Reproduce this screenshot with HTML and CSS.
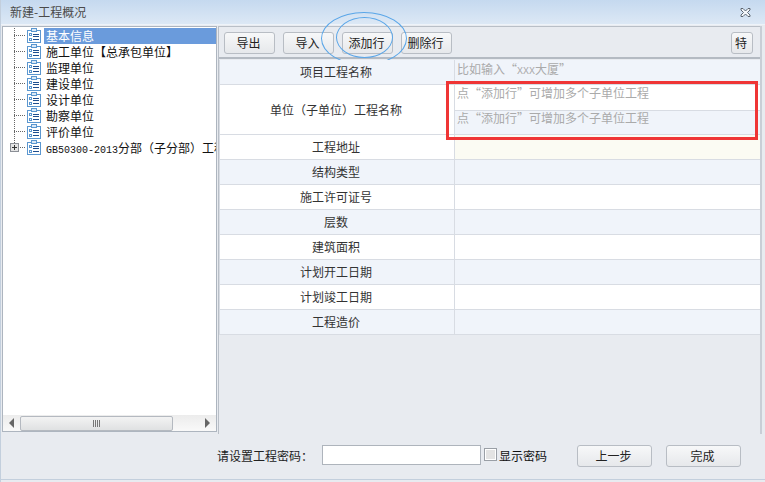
FILE: index.html
```html
<!DOCTYPE html>
<html lang="zh-CN">
<head>
<meta charset="utf-8">
<title>新建-工程概况</title>
<link rel="stylesheet" href="styles.css">
</head>
<body>
<svg class="defs" width="0" height="0">
  <symbol id="doc" viewBox="0 0 16 16">
    <rect x="1.5" y="2.5" width="13" height="12" fill="#fff" stroke="#5b97d0"/>
    <rect x="5.5" y="0.5" width="5" height="3" fill="#dbe9f6" stroke="#5b97d0"/>
    <rect x="3.5" y="5.5" width="2" height="2" fill="#fff" stroke="#5b97d0"/>
    <rect x="3.5" y="10.5" width="2" height="2" fill="#fff" stroke="#5b97d0"/>
    <path d="M7 6.500h6M7 8.500h6M7 11.500h6" stroke="#1f4f8f" fill="none"/>
  </symbol>
</svg>
<div class="window">
  <header class="titlebar">
    <span class="title">新建-工程概况</span>
    <svg class="close" width="13" height="11" viewBox="0 0 13 11"><path d="M2 1.500h2l2.500 2.500 2.500-2.500h2v1.500l-2.500 2.500 2.500 2.500v1.500h-2l-2.500-2.500-2.500 2.500h-2v-1.500l2.500-2.500-2.500-2.500z" fill="#f4f7fa" stroke="#5d6670"/></svg>
  </header>
  <div class="main">
    <aside class="tree">
      <ul class="tree-list">
        <li class="node"><span class="branch"></span><svg class="doc"><use href="#doc"/></svg><span class="label selected">基本信息</span></li>
        <li class="node"><span class="branch"></span><svg class="doc"><use href="#doc"/></svg><span class="label">施工单位【总承包单位】</span></li>
        <li class="node"><span class="branch"></span><svg class="doc"><use href="#doc"/></svg><span class="label">监理单位</span></li>
        <li class="node"><span class="branch"></span><svg class="doc"><use href="#doc"/></svg><span class="label">建设单位</span></li>
        <li class="node"><span class="branch"></span><svg class="doc"><use href="#doc"/></svg><span class="label">设计单位</span></li>
        <li class="node"><span class="branch"></span><svg class="doc"><use href="#doc"/></svg><span class="label">勘察单位</span></li>
        <li class="node"><span class="branch"></span><svg class="doc"><use href="#doc"/></svg><span class="label">评价单位</span></li>
        <li class="node"><span class="branch last"><span class="expander"></span></span><svg class="doc"><use href="#doc"/></svg><span class="label"><span class="latin">GB50300-2013</span>分部（子分部）工程概况</span></li>
      </ul>
      <div class="hscroll">
        <span class="arrow left"></span>
        <span class="thumb"><span class="grip"></span></span>
        <span class="arrow right"></span>
      </div>
    </aside>
    <section class="content">
      <div class="toolbar">
        <button class="btn">导出</button>
        <button class="btn">导入</button>
        <button class="btn">添加行</button>
        <button class="btn">删除行</button>
        <button class="btn small">特</button>
        <span class="ring outer"></span>
        <span class="ring inner"></span>
      </div>
      <div class="sheet">
        <div class="row alt"><div class="key">项目工程名称</div><div class="val hint">比如输入“<span class="latin">XXX</span>大厦”</div></div>
        <div class="row tall">
          <div class="key">单位（子单位）工程名称</div>
          <div class="val stack">
            <div class="sub hint">点“添加行”可增加多个子单位工程</div>
            <div class="sub alt hint">点“添加行”可增加多个子单位工程</div>
          </div>
        </div>
        <div class="row"><div class="key">工程地址</div><div class="val cream"></div></div>
        <div class="row alt"><div class="key">结构类型</div><div class="val"></div></div>
        <div class="row"><div class="key">施工许可证号</div><div class="val"></div></div>
        <div class="row alt"><div class="key">层数</div><div class="val"></div></div>
        <div class="row"><div class="key">建筑面积</div><div class="val"></div></div>
        <div class="row alt"><div class="key">计划开工日期</div><div class="val"></div></div>
        <div class="row"><div class="key">计划竣工日期</div><div class="val"></div></div>
        <div class="row alt"><div class="key">工程造价</div><div class="val"></div></div>
        <span class="callout"></span>
      </div>
    </section>
  </div>
  <footer class="footer">
    <label class="pw-label" for="pw">请设置工程密码：</label>
    <input class="pw-input" id="pw" type="text">
    <span class="check"></span>
    <span class="check-label">显示密码</span>
    <button class="btn wide prev">上一步</button>
    <button class="btn wide">完成</button>
  </footer>
</div>
</body>
</html>
```
FILE: styles.css
```css
* { box-sizing: border-box; }
html, body { margin: 0; padding: 0; }
body {
  width: 765px;
  height: 482px;
  overflow: hidden;
  font-family: "Noto Sans CJK SC", "Liberation Sans", sans-serif;
  font-size: 12px;
  line-height: 16px;
  color: #222;
  background: #e8ebf0;
}
.defs { display: block; height: 0; }
.latin { font-family: "Liberation Mono", monospace; font-size: 10px; }

.window {
  width: 765px;
  height: 482px;
  display: flex;
  flex-direction: column;
  background: #e8ebf0;
  border-left: 1px solid #c3cfdd;
}

.titlebar {
  height: 25px;
  flex: none;
  display: flex;
  align-items: center;
  justify-content: space-between;
  padding: 0 13px 0 9px;
  background: linear-gradient(#c5d9ef, #dce8f5);
  border-bottom: 1px solid #eef3f9;
}
.title { color: #4a4a4a; }

.main {
  flex: none;
  height: 409px;
  display: flex;
  padding: 1px 3px 0 1px;
}

.tree {
  width: 215px;
  height: 406px;
  flex: none;
  display: flex;
  flex-direction: column;
  background: #fff;
  border: 1px solid #adb5bf;
}
.tree-list {
  flex: 1;
  list-style: none;
  margin: 0;
  padding: 1px 0 0;
  overflow: hidden;
}
.node {
  height: 16px;
  display: flex;
  align-items: center;
  white-space: nowrap;
}
.branch {
  position: relative;
  width: 12px;
  height: 16px;
  margin-left: 11px;
  flex: none;
  background:
    repeating-linear-gradient(to bottom, #666 0 1px, transparent 1px 2px) 0 0 / 1px 100% no-repeat,
    repeating-linear-gradient(to right, #666 0 1px, transparent 1px 2px) 0 7px / 100% 1px no-repeat;
}
.branch.last {
  background:
    repeating-linear-gradient(to bottom, #666 0 1px, transparent 1px 2px) 0 0 / 1px 8px no-repeat,
    repeating-linear-gradient(to right, #666 0 1px, transparent 1px 2px) 0 7px / 100% 1px no-repeat;
}
.expander {
  position: absolute;
  left: -4px;
  top: 3px;
  width: 9px;
  height: 9px;
  border: 1px solid #8b8f96;
  background:
    linear-gradient(#333, #333) center / 5px 1px no-repeat,
    linear-gradient(#333, #333) center / 1px 5px no-repeat,
    #e4e4e4;
}
.doc { width: 16px; height: 16px; flex: none; }
.label {
  flex: 1;
  min-width: 0;
  overflow: hidden;
  height: 16px;
  margin-left: 2px;
  padding-left: 2px;
  color: #111;
}
.label.selected { background: #6a9bdc; color: #fff; }

.hscroll {
  height: 16px;
  flex: none;
  display: flex;
  align-items: center;
  padding: 0 6px;
  background: linear-gradient(#ececec, #f9f9f9);
}
.arrow { width: 0; height: 0; flex: none; border-top: 5px solid transparent; border-bottom: 5px solid transparent; }
.arrow.left { border-right: 5px solid #666; }
.arrow.right { border-left: 5px solid #666; margin-left: auto; }
.thumb {
  width: 153px;
  height: 15px;
  margin-left: 6px;
  display: flex;
  align-items: center;
  justify-content: center;
  border: 1px solid #b4b9c0;
  border-radius: 2px;
  background: linear-gradient(#f3f3f3, #dfe1e2);
}
.grip {
  width: 7px;
  height: 7px;
  background: repeating-linear-gradient(to right, #777 0 1px, transparent 1px 2px);
}

.content {
  flex: 1;
  min-width: 0;
  height: 408px;
  margin-left: 1px;
  display: flex;
  flex-direction: column;
  border-left: 1px solid #b9bfc7;
  border-right: 2px solid #c9ced6;
}
.toolbar {
  position: relative;
  height: 33px;
  flex: none;
  display: flex;
  align-items: flex-start;
  gap: 8px;
  padding: 5px 7px 0 5px;
  background: #e8ebf0;
  border-top: 1px solid #b9bfc7;
  border-bottom: 2px solid #b4bac2;
}
.btn {
  width: 51px;
  height: 22px;
  padding: 0 2px 0 0;
  flex: none;
  font: inherit;
  color: #222;
  border: 1px solid #b8bdc4;
  border-radius: 3px;
  background: linear-gradient(#f7f8f9, #e6e8eb);
}
.btn.small { width: 22px; margin-left: auto; }
.btn.wide { width: 75px; }
.ring {
  position: absolute;
  border: 1px solid #5aa6e8;
  border-radius: 50%;
  pointer-events: none;
}
.ring.outer { left: 102px; top: -15px; width: 86px; height: 53px; }
.ring.inner { left: 117px; top: -10px; width: 57px; height: 41px; }

.sheet { position: relative; flex: 1; padding-top: 1px; }
.row {
  height: 25px;
  display: flex;
  background: #fff;
  border-bottom: 1px solid #d8dce3;
}
.row.alt { background: #f0f4fa; }
.row.tall { height: 50px; }
.key {
  width: 236px;
  flex: none;
  display: flex;
  align-items: center;
  justify-content: center;
  padding-right: 2px;
  color: #333;
  border-right: 1px solid #d8dce3;
  border-left: 1px solid #d8dce3;
}
.val { flex: 1; min-width: 0; padding: 0 2px; }
.val.hint { color: #aaa; line-height: 18px; }
.val.cream { background: #fbfbf3; }
.val.stack { padding: 0; }
.sub { height: 25px; padding: 0 2px; color: #aaa; line-height: 16px; }
.sub.alt { height: 24px; background: #f0f4fa; border-top: 1px solid #d8dce3; line-height: 14px; }
.callout {
  position: absolute;
  left: 227px;
  top: 22px;
  width: 312px;
  height: 59px;
  border: 3px solid #ef3535;
}

.footer {
  flex: 1;
  display: flex;
  align-items: flex-start;
  padding: 11px 0 0 216px;
  border-bottom: 1px solid #c3cfdd;
  margin-bottom: 2px;
}
.pw-label { width: 105px; flex: none; line-height: 21px; }
.pw-input {
  width: 159px;
  height: 20px;
  flex: none;
  border: 1px solid #aeb4bc;
  background: #fff;
  padding: 0;
}
.check {
  width: 13px;
  height: 13px;
  flex: none;
  margin: 3px 2px 0 3px;
  border: 1px solid #9a9fa6;
  box-shadow: inset 0 0 0 1px #fff;
  background: #e3e3e3;
}
.check-label { line-height: 21px; color: #111; }
.btn.prev { margin-left: 30px; margin-right: 14px; }
```
